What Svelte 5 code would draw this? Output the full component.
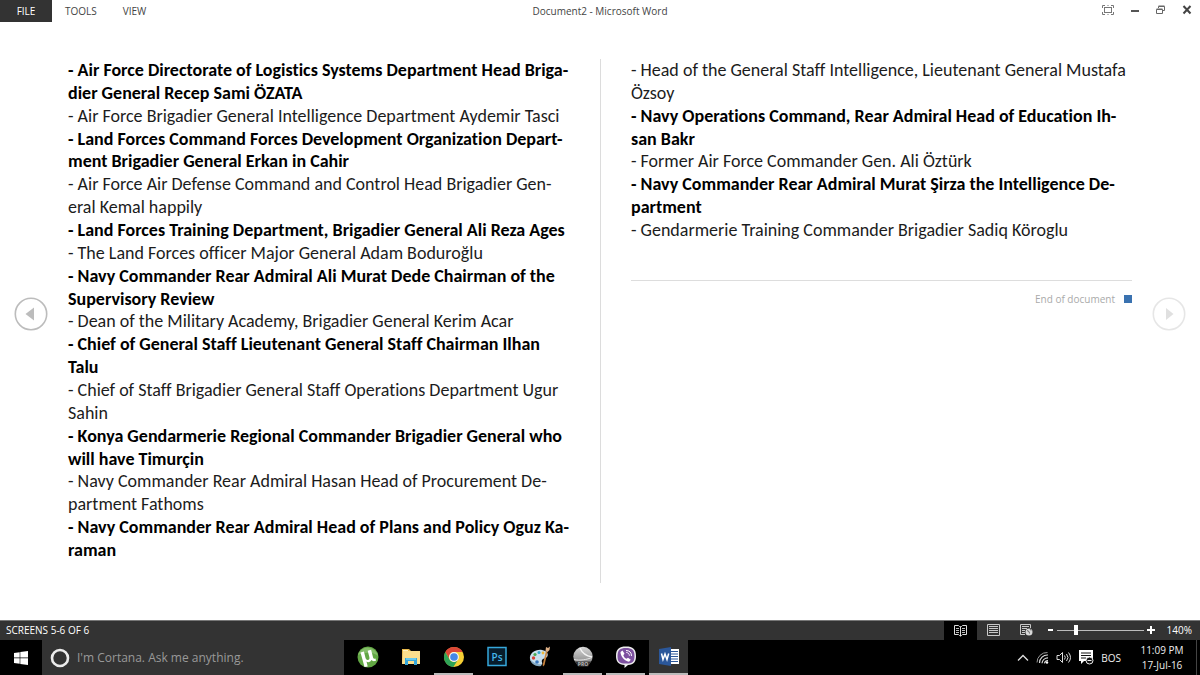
<script>
  const leftEntries = [
    { bold: true, lines: ['- Air Force Directorate of Logistics Systems Department Head Briga-', 'dier General Recep Sami ÖZATA'] },
    { bold: false, lines: ['- Air Force Brigadier General Intelligence Department Aydemir Tasci'] },
    { bold: true, lines: ['- Land Forces Command Forces Development Organization Depart-', 'ment Brigadier General Erkan in Cahir'] },
    { bold: false, lines: ['- Air Force Air Defense Command and Control Head Brigadier Gen-', 'eral Kemal happily'] },
    { bold: true, lines: ['- Land Forces Training Department, Brigadier General Ali Reza Ages'] },
    { bold: false, lines: ['- The Land Forces officer Major General Adam Boduroğlu'] },
    { bold: true, lines: ['- Navy Commander Rear Admiral Ali Murat Dede Chairman of the', 'Supervisory Review'] },
    { bold: false, lines: ['- Dean of the Military Academy, Brigadier General Kerim Acar'] },
    { bold: true, lines: ['- Chief of General Staff Lieutenant General Staff Chairman Ilhan', 'Talu'] },
    { bold: false, lines: ['- Chief of Staff Brigadier General Staff Operations Department Ugur', 'Sahin'] },
    { bold: true, lines: ['- Konya Gendarmerie Regional Commander Brigadier General who', 'will have Timurçin'] },
    { bold: false, lines: ['- Navy Commander Rear Admiral Hasan Head of Procurement De-', 'partment Fathoms'] },
    { bold: true, lines: ['- Navy Commander Rear Admiral Head of Plans and Policy Oguz Ka-', 'raman'] }
  ];
  const rightEntries = [
    { bold: false, lines: ['- Head of the General Staff Intelligence, Lieutenant General Mustafa', 'Özsoy'] },
    { bold: true, lines: ['- Navy Operations Command, Rear Admiral Head of Education Ih-', 'san Bakr'] },
    { bold: false, lines: ['- Former Air Force Commander Gen. Ali Öztürk'] },
    { bold: true, lines: ['- Navy Commander Rear Admiral Murat Şirza the Intelligence De-', 'partment'] },
    { bold: false, lines: ['- Gendarmerie Training Commander Brigadier Sadiq Köroglu'] }
  ];
  const apps = [
    { id: 'utorrent', label: 'µTorrent', open: false },
    { id: 'explorer', label: 'File Explorer', open: false },
    { id: 'chrome', label: 'Chrome', open: true },
    { id: 'photoshop', label: 'Photoshop', open: false },
    { id: 'paint', label: 'Paint', open: false },
    { id: 'earth', label: 'Google Earth Pro', open: true },
    { id: 'viber', label: 'Viber', open: true },
    { id: 'word', label: 'Word', open: true, active: true }
  ];
  let zoom = $state(21);
</script>

{#snippet entries(list)}
  {#each list as entry}
    <p class:bold={entry.bold}>
      {#each entry.lines as line}<span>{line}</span>{/each}
    </p>
  {/each}
{/snippet}

<div class="window">
  <header class="titlebar">
    <nav>
      <button class="file">FILE</button>
      <button>TOOLS</button>
      <button>VIEW</button>
    </nav>
    <h1>Document2 - Microsoft Word</h1>
    <div class="controls">
      <button aria-label="Full screen">
        <svg width="12" height="10" viewBox="0 0 12 10" fill="none" stroke="#777"><path d="M.5 3V.5H3M9 .5h2.500V3M11.500 7v2.500H9M3 9.500H.5V7" /><rect x="2.500" y="2.500" width="7" height="5" /><path d="M5 .5h2M5 9.500h2" stroke="#bbb" /></svg>
      </button>
      <button aria-label="Minimize">
        <svg width="10" height="10" viewBox="0 0 10 10"><path d="M1 5h8v2H1z" fill="#555" /></svg>
      </button>
      <button aria-label="Restore">
        <svg width="10" height="10" viewBox="0 0 10 10" fill="none" stroke="#666"><path d="M.5 4.500h6v4h-6zM.5 4h6M2.500 3V1.500h6v4H7M2.500 1h6" /></svg>
      </button>
      <button aria-label="Close">
        <svg width="10" height="10" viewBox="0 0 10 10"><path d="M1.500 1l7 7.500M8.500 1l-7 7.500" stroke="#444" stroke-width="2" /></svg>
      </button>
    </div>
  </header>

  <main>
    <button class="turn" aria-label="Previous screen">
      <svg width="34" height="34" viewBox="0 0 34 34"><circle cx="17" cy="17" r="15.700" fill="#fff" stroke="#bcbcbc" stroke-width="1.600" /><path d="M20 10.500v13L11.500 17z" fill="#bcbcbc" /></svg>
    </button>
    <div class="pages">
      <article>{@render entries(leftEntries)}</article>
      <article>
        {@render entries(rightEntries)}
        <div class="end"><span>End of document</span><i></i></div>
      </article>
    </div>
    <button class="turn" aria-label="Next screen" disabled>
      <svg width="34" height="34" viewBox="0 0 34 34"><circle cx="17" cy="17" r="15.700" fill="#fff" stroke="#e6e6e6" stroke-width="1.600" /><path d="M14 11v12l7.500-6z" fill="#e0e0e0" /></svg>
    </button>
  </main>

  <footer class="status">
    <span class="screens">SCREENS 5-6 OF 6</span>
    <button class="view on" aria-label="Read mode">
      <svg width="13" height="12" viewBox="0 0 13 12" fill="none" stroke="#ddd"><path d="M6.500 2v9.500M6.500 1.500h-1l-1-1h-4v9h4l1 1h2l1-1h4v-9h-4l-1 1z" /><path d="M2 3.500h3M2 5.500h3M2 7.500h3M8 3.500h3M8 5.500h3M8 7.500h3" stroke="#bbb" /></svg>
    </button>
    <button class="view" aria-label="Print layout">
      <svg width="13" height="12" viewBox="0 0 13 12" fill="none" stroke="#c8c8c8"><path d="M.5.5h12v11H.5zM2 2.500h9M2 4.500h9M2 6.500h9M2 8.500h9" /></svg>
    </button>
    <button class="view" aria-label="Web layout">
      <svg width="13" height="12" viewBox="0 0 13 12" fill="none" stroke="#c8c8c8"><path d="M5 10.500H.5V.5h10V4M2 2.500h7M2 4.500h5M2 6.500h3M2 8.500h3" /><circle cx="9" cy="8" r="3.500" fill="#d8d8d8" stroke="none" /><path d="M7 6.500l2 1 .5 2M10 5l1 1.500" stroke="#666" /></svg>
    </button>
    <button class="step" aria-label="Zoom out"><svg width="7" height="8" viewBox="0 0 7 8"><path d="M1 3h5v2H1z" fill="#fff" /></svg></button>
    <input type="range" aria-label="Zoom" min="0" max="100" bind:value={zoom} />
    <button class="step plus" aria-label="Zoom in"><svg width="8" height="8" viewBox="0 0 8 8"><path d="M0 3h3V0h2v3h3v2H5v3H3V5H0z" fill="#fff" /></svg></button>
    <span class="percent">140%</span>
  </footer>

  <div class="taskbar">
    <button class="start" aria-label="Start">
      <svg width="14" height="14" viewBox="0 0 14 14" fill="#fff"><path d="M0 2l5.700-.8v5.400H0zM6.300 1.100L14 0v6.600H6.300zM0 7.300h5.700v5.400L0 11.900zM6.300 7.300H14V14l-7.700-1.100z" /></svg>
    </button>
    <label class="search">
      <svg width="20" height="20" viewBox="0 0 20 20"><circle cx="10" cy="10" r="8" fill="none" stroke="#ececec" stroke-width="2.600" /></svg>
      <input type="text" placeholder="I'm Cortana. Ask me anything." aria-label="Search" />
    </label>
    <div class="apps">
      {#each apps as app}
        <button class:open={app.open} class:active={app.active} aria-label={app.label}>
          <svg width="22" height="22" viewBox="0 0 22 22">
            {#if app.id === 'utorrent'}
              <circle cx="11" cy="11" r="10.500" fill="#62a744" /><path d="M1 9a10.300 10.300 0 0 1 20 1c-5-4-13-4-20-1z" fill="#83bd68" />
              <path d="M3.500 6.500l3.400-.9 1.700 6.700q.8 2.200 2.600 1.600 1.800-.6 1.200-2.700L10.700 4.700l3.400-.9 2.100 8.200q.5 1.200 2.300.6l.5 2.200q-3.300 1-4.600-.7-.5 1.500-2.200 1.900-1.600.4-2.700-.4l1.200 4.800-3.200.5z" fill="#fff" />
            {:else if app.id === 'explorer'}
              <path d="M2 3h7l2 2h9v13H2z" fill="#e8b94c" /><path d="M3 5h17v13H2z" fill="#fbdf8d" /><path d="M3 4h5v1H3z" fill="#fff3c4" />
              <path d="M5 12h12v7h-3v-4H8v4H5z" fill="#35a7dc" /><path d="M6 12h10v2H6z" fill="#67c9ed" />
            {:else if app.id === 'chrome'}
              <circle cx="11" cy="11" r="10" fill="#f7cf35" />
              <path d="M2.300 6A10 10 0 0 1 19.700 6H11a5 5 0 0 0-4.400 7.500z" fill="#dc4737" />
              <path d="M2.300 6A10 10 0 0 0 10.300 21l4.900-7.500a5 5 0 0 1-8.600 0z" fill="#2fa457" />
              <circle cx="11" cy="11" r="4.900" fill="#f5f5f5" /><circle cx="11" cy="11" r="3.800" fill="#4488e8" />
            {:else if app.id === 'photoshop'}
              <rect x="2" y="1.500" width="18" height="18" fill="#071c2b" stroke="#36a8dc" stroke-width="1.500" />
              <text x="11" y="14.500" text-anchor="middle" font-size="10" font-family="Open Sans, sans-serif" font-weight="600" fill="#44b8ec">Ps</text>
            {:else if app.id === 'paint'}
              <path d="M1 13C0 7 7 3 13 4c5 1 7 4 5 7-2 2-4 1-5 3-1 3 2 3-1 5-4 1-10-1-11-6z" fill="#c9dfed" />
              <path d="M1 13c1 5 6 8 11 7l1-2c-4 1-9-1-12-5z" fill="#86abc3" />
              <circle cx="4.500" cy="12" r="1.700" fill="#d94135" /><circle cx="6" cy="8.500" r="1.600" fill="#49a74e" /><circle cx="10" cy="6.500" r="1.500" fill="#35a5cf" /><circle cx="8" cy="16" r="1.800" fill="#3976bd" /><circle cx="14" cy="7" r="1.400" fill="#efb83a" />
              <path d="M17 5l1.500.7L15.500 19l-1.500 1.500-.3-1.800z" fill="#c9843f" /><path d="M16.500 5l.5-4 2 1 2-1.500-.500 3.500-2 2z" fill="#dfb187" />
            {:else if app.id === 'earth'}
              <defs>
                <linearGradient id="globe" x1="0" y1="0" x2="0" y2="1"><stop offset="0" stop-color="#d6d6d6" /><stop offset="1" stop-color="#7c7c7c" /></linearGradient>
              </defs>
              <circle cx="11" cy="10.500" r="9.700" fill="url(#globe)" />
              <path d="M8 2c2 5 6 8 12 9" fill="none" stroke="#f4f4f4" stroke-width="1.300" />
              <path d="M2 13.500c6 1.500 13 0 18-2" fill="none" stroke="#e4e4e4" />
              <path d="M3 15.500h16l-3 5H6z" fill="#333" /><text x="11" y="20" text-anchor="middle" font-size="5" font-family="Open Sans, sans-serif" font-weight="700" fill="#bbb">PRO</text>
            {:else if app.id === 'viber'}
              <path d="M11 .5c7 0 10 2.500 10 9.500 0 6-2 8.500-8 9L9.500 22v-3C3.500 18.500 1 16 1 10 1 3 4 .5 11 .5z" fill="#eee" />
              <path d="M11 2c6 0 8.500 2 8.500 8s-2 7.500-8.500 7.500S2.500 16 2.500 10 5 2 11 2z" fill="#7d51a0" />
              <path d="M7.500 4.500L5.500 6c0 4.500 4 9 8.500 9.800l1.800-2-2.800-2-1.500 1C10 12.200 8.700 10.700 8.300 9.200l1.200-1.400z" fill="#fff" />
              <path d="M11 4.500c3.500 0 5.500 2 5.500 5.500M11.300 6.500c2 .2 3 1.300 3.100 3.200" fill="none" stroke="#fff" />
            {:else}
              <path d="M11 3h10v15H11z" fill="#fff" /><path d="M12 5.500h8M12 8h8M12 10.500h8M12 13h8M12 15.500h8" stroke="#2b579a" />
              <path d="M1 3l12-2v19L1 18z" fill="#2b579a" /><path d="M3.500 7.500l1.500 6 2-5.500 2 5.500 1.700-6" fill="none" stroke="#fff" stroke-width="1.500" />
            {/if}
          </svg>
        </button>
      {/each}
    </div>
    <div class="tray">
      <button aria-label="Show hidden icons"><svg width="12" height="8" viewBox="0 0 12 8"><path d="M1 6.500l5-5 5 5" fill="none" stroke="#ddd" stroke-width="1.300" /></svg></button>
      <button aria-label="Wi-Fi"><svg width="13" height="13" viewBox="0 0 13 13" fill="none" stroke="#ddd"><path d="M1 11.500A10 10 0 0 1 11.500 1.500" stroke="#999" /><path d="M3.500 12A8 8 0 0 1 12 4M6 12.200A6 6 0 0 1 12 6.800M8.500 12.300A3.500 3.500 0 0 1 12 9.500" stroke-width="1.200" /><circle cx="11" cy="11.500" r="1.200" fill="#fff" stroke="none" /></svg></button>
      <button aria-label="Volume"><svg width="16" height="13" viewBox="0 0 16 13" fill="none" stroke="#ddd"><path d="M1 4.500h2.500L6.500 1.500v10L3.500 8.500H1zM8.500 4.500q1.500 2 0 4M10.500 3q3 3.500 0 7M12.500 1.500q4 5 0 10" /></svg></button>
      <button aria-label="Notifications"><svg width="15" height="15" viewBox="0 0 15 15"><path d="M0 0h14v11H5l-3 3v-3H0z" fill="#fff" /><path d="M2 3h10M2 5.500h10M2 8h5" stroke="#111" /><circle cx="10.500" cy="10.500" r="3.500" fill="#111" stroke="#eee" /><path d="M8.500 10.500h4" stroke="#eee" /></svg></button>
      <button class="lang">BOS</button>
    </div>
    <button class="clock"><span>11:09 PM</span><span>17-Jul-16</span></button>
    <button class="desktop" aria-label="Show desktop"></button>
  </div>
</div>

<style>
  :global(body) { margin: 0; background: #fff; }
  .window { min-height: 100vh; display: flex; flex-direction: column; font-family: 'Open Sans', 'Noto Sans', sans-serif; font-size: 10px; color: #444; }
  button { border: 0; padding: 0; margin: 0; background: none; font: inherit; color: inherit; display: flex; align-items: center; justify-content: center; }
  svg { display: block; flex: none; }

  .titlebar { height: 22px; display: grid; grid-template-columns: 1fr auto 1fr; align-items: center; }
  .titlebar nav { display: flex; height: 22px; }
  .titlebar nav button { padding: 0 13px; }
  .titlebar nav .file { width: 52px; padding: 0; background: #333; color: #fff; }
  .titlebar h1 { margin: 0; font-size: 10px; font-weight: 400; }
  .controls { display: flex; justify-content: flex-end; align-items: center; height: 20px; align-self: start; gap: 16px; padding-right: 8px; }

  main { flex: 1; display: flex; align-items: center; justify-content: space-between; padding: 0 14px; }
  .turn { margin-bottom: 14px; }
  .pages { flex: 1; align-self: stretch; display: grid; grid-template-columns: 1fr 1fr; margin: 37px 20px; background: linear-gradient(#dcdcdc, #dcdcdc) center / 1px 100% no-repeat; column-gap: 62px; }
  article { font-family: Calibri, Carlito, Lato, sans-serif; font-size: 18px; line-height: 1.27; font-variant-ligatures: none; color: #1c1c1c; min-width: 0; }
  article p { margin: 0; }
  article p span { display: block; white-space: nowrap; }
  .bold { font-weight: 700; color: #000; }
  .end { display: flex; align-items: center; justify-content: flex-end; gap: 9px; margin-top: 38px; padding-top: 10px; border-top: 1px solid #ddd; font-family: 'Open Sans', sans-serif; font-size: 10px; line-height: 16px; color: #aaa; }
  .end i { width: 8px; height: 8px; background: #3a72b0; }

  .status { height: 19px; display: flex; align-items: flex-start; line-height: 18px; background: #333; border-top: 1px solid #777; color: #fff; }
  .screens { flex: 1; padding-left: 6px; }
  .view { width: 33px; height: 18px; }
  .view.on { height: 19px; background: #000; }
  .step { width: 14px; height: 18px; }
  .status input { appearance: none; width: 87px; height: 18px; margin: 0; background: linear-gradient(#bbb, #bbb) center / 100% 1px no-repeat; }
  .status input::-webkit-slider-thumb { appearance: none; width: 4px; height: 10px; background: #fff; }
  .percent { width: 42px; padding-right: 8px; text-align: right; box-sizing: border-box; }

  .taskbar { height: 35px; display: flex; background: #000; color: #eee; }
  .start { width: 42px; }
  .search { flex: 0 1 302px; box-sizing: border-box; display: flex; align-items: center; gap: 7px; padding-left: 8px; background: #333; }
  .search input { flex: 1; min-width: 0; border: 0; padding: 0; background: none; font: inherit; font-size: 12px; color: #fff; outline: 0; }
  .search input::placeholder { color: #999; opacity: 1; }
  .apps { display: flex; gap: 4px; padding-left: 4px; }
  .apps button { width: 39px; border-bottom: 2px solid transparent; }
  .apps .open { border-color: #bbb; }
  .apps .active { background: #333; }
  .tray { margin: 0 7px 0 auto; display: flex; align-items: stretch; gap: 7px; }
  .clock { flex-direction: column; width: 68px; line-height: 15px; }
  .desktop { width: 4px; border-left: 1px solid #444; }
</style>
